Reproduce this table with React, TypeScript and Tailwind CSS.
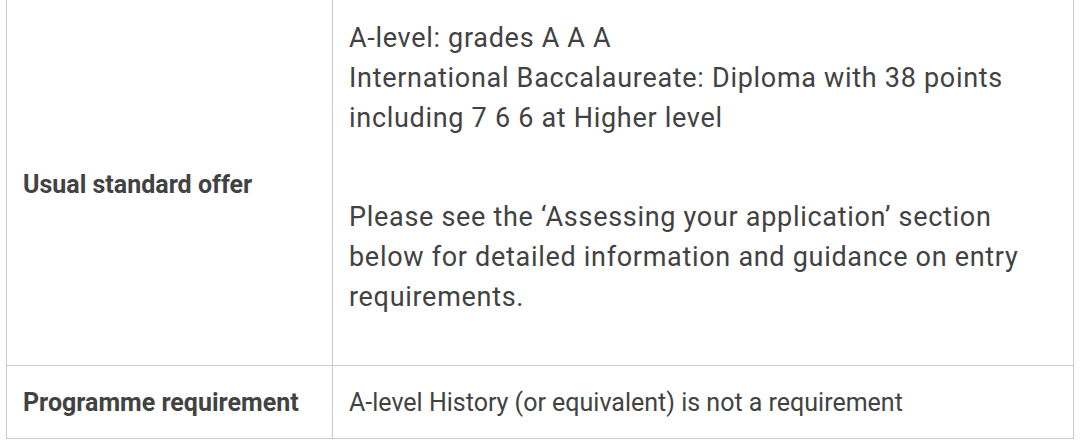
export default function App() {
  return (
    <div className="w-[1080px] h-[442px] overflow-hidden bg-white font-['Roboto',sans-serif] text-[#424242]">
      <table className="ml-[6px] w-[1068px] border-collapse table-fixed">
        <colgroup>
          <col className="w-[326px]" />
          <col />
        </colgroup>
        <tbody>
          <tr>
            <td className="border-x border-b border-[#cbcbcb] px-4 pt-[4px] align-middle text-[25px] font-bold">
              Usual standard offer
            </td>
            <td className="border-x border-b border-[#cbcbcb] px-4 pt-[18px] pb-[48px] text-[27px] leading-[40px] tracking-[0.7px]">
              <p>A-level: grades A A A</p>
              <p>International Baccalaureate: Diploma with 38 points</p>
              <p>including 7 6 6 at Higher level</p>
              <p className="mt-[59px]">
                Please see the ‘Assessing your application’ section
                <br />
                below for detailed information and guidance on entry
                <br />
                requirements.
              </p>
            </td>
          </tr>
          <tr>
            <td className="border-x border-b border-[#cbcbcb] px-4 pt-[18px] pb-[16px] leading-[38px] text-[25px] font-bold">
              Programme requirement
            </td>
            <td className="border-x border-b border-[#cbcbcb] px-4 pt-[18px] pb-[16px] leading-[38px] text-[25px]">
              A-level History (or equivalent) is not a requirement
            </td>
          </tr>
        </tbody>
      </table>
    </div>
  );
}
